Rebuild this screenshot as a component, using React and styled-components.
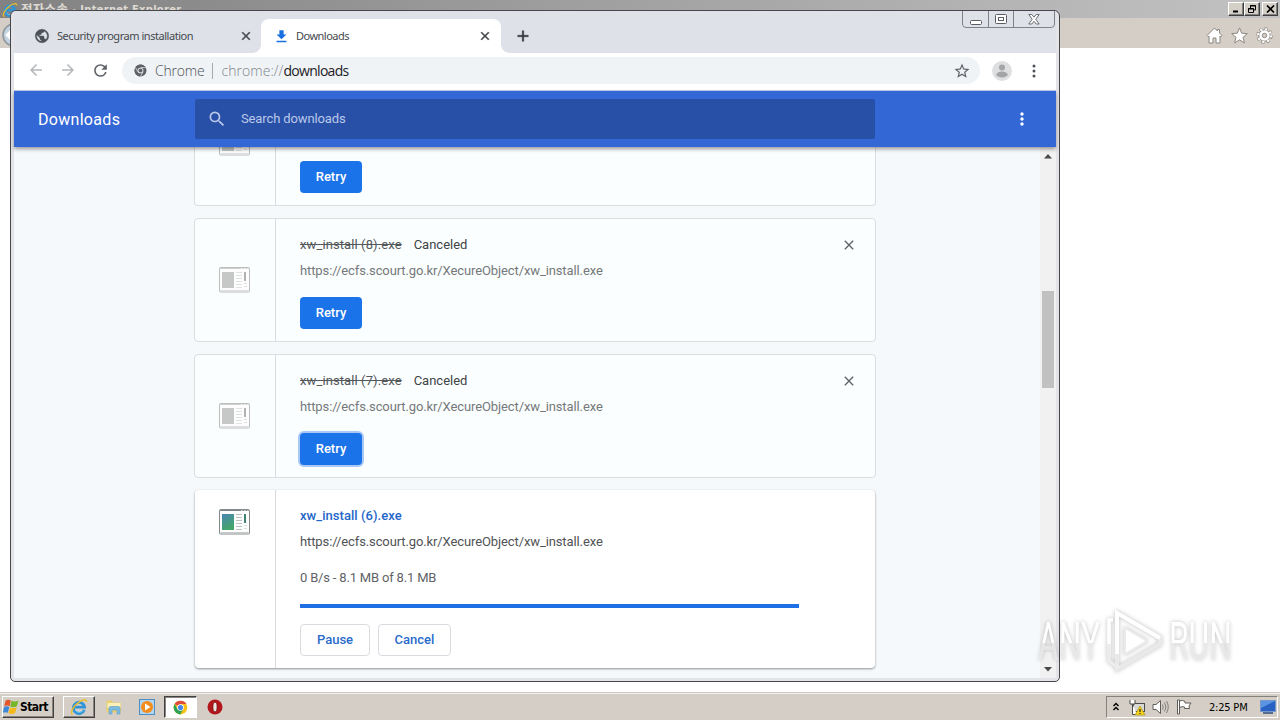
import styled, {createGlobalStyle, css} from "styled-components";
import {
    MdPublic, MdClose, MdAdd, MdArrowBack, MdArrowForward, MdRefresh,
    MdStarBorder, MdMoreVert, MdSearch, MdFileDownload
} from "react-icons/md";

const GlobalStyle = createGlobalStyle`
    * { box-sizing : border-box; }
    body {
        margin : 0;
        overflow : hidden;
        font-family : Roboto, "Liberation Sans", sans-serif;
    }
    button { font-family : inherit; padding : 0; }
    svg { display : block; flex : none; }
`;

/* ---------- desktop ---------- */
const Desktop = styled.div`
    position : relative;
    width : 1280px;
    height : 720px;
    display : flex;
    flex-direction : column;
    background : #fff;
    overflow : hidden;
`;
const IeTitle = styled.div`
    height : 18px;
    flex : none;
    display : flex;
    align-items : center;
    justify-content : space-between;
    padding : 0 2px 0 2px;
    background : linear-gradient(90deg, #828282, #c2c2c2);
`;
const IeName = styled.div`
    display : flex;
    align-items : center;
    gap : 3px;
    color : #dedad2;
    font : bold 11px/16px "DejaVu Sans Condensed", "Noto Sans CJK KR", sans-serif;
    letter-spacing : 0.3px;
    white-space : nowrap;
    padding-top : 1px;
`;
const Korean = styled.span`
    font-size : 12.5px;
    margin-right : 1px;
`;
const WinButtons = styled.div`
    display : flex;
    button:last-child { margin-left : 2px; }
`;
const WinButton = styled.button`
    width : 16px;
    height : 14px;
    display : flex;
    align-items : center;
    justify-content : center;
    background : #d4d0c8;
    border : 1px solid;
    border-color : #fff #404040 #404040 #fff;
    box-shadow : inset -1px -1px 0 #808080;
`;
const IeToolbar = styled.div`
    height : 30px;
    flex : none;
    display : flex;
    align-items : center;
    justify-content : space-between;
    padding : 4px 7px 0 2px;
    background : #d4cec6;
`;
const IeTools = styled.div`
    display : flex;
    gap : 8px;
`;
const IePage = styled.div`
    flex : 1;
    background : #fff;
`;

/* ---------- chrome window ---------- */
const Window = styled.div`
    position : absolute;    // 바탕화면 위에 떠있는 창
    left : 10px;
    top : 10px;
    width : 1050px;
    height : 672px;
    display : flex;
    flex-direction : column;
    padding : 0 3px 3px;
    border : 1px solid #46464c;
    border-radius : 6px 6px 5px 5px;
    background : #e2e4e8;
    overflow : hidden;
`;
const TabStrip = styled.div`
    height : 42px;
    flex : none;
    display : flex;
    align-items : flex-end;
    background : #dee1e8;
    path[fill="none"] { stroke : none; }
`;
const Tab = styled.div`
    position : relative;
    width : ${p => p.$width};
    height : 34px;
    display : flex;
    align-items : center;
    padding : 0 ${p => p.$active ? "9px" : "8px"} 0 ${p => p.$active ? "12px" : "20px"};
    color : #45494d;
    font-family : "Noto Sans", sans-serif;
    font-size : 11px;
    letter-spacing : ${p => p.$track};
    white-space : nowrap;
    ${p => p.$active && css`
        background : #fff;
        border-radius : 8px 8px 0 0;
        &::before, &::after {
            content : "";
            position : absolute;
            bottom : 0;
            width : 8px;
            height : 8px;
        }
        &::before {
            left : -8px;
            background : radial-gradient(circle at 0 0, transparent 7.5px, #fff 8px);
        }
        &::after {
            right : -8px;
            background : radial-gradient(circle at 100% 0, transparent 7.5px, #fff 8px);
        }
    `}
`;
const TabTitle = styled.span`
    flex : 1;
    margin-left : ${p => p.$gap};
    padding-bottom : 2px;
`;
const NewTab = styled.div`
    height : 34px;
    margin-left : 13px;
    display : flex;
    align-items : center;
    color : #33363b;
    svg { stroke : currentColor; stroke-width : 0.6; }
`;
const Caption = styled.div`
    position : absolute;
    right : 4px;
    top : -1px;
    width : 93px;
    height : 18px;
    display : grid;
    grid-template-columns : 25px 25px 1fr;
    border : 1px solid #808288;
    border-radius : 0 0 4px 4px;
`;
const CaptionCell = styled.div`
    display : flex;
    align-items : center;
    justify-content : center;
    & + & { border-left : 1px solid #808288; }
`;
const Toolbar = styled.div`
    height : 38px;
    flex : none;
    display : flex;
    align-items : center;
    background : #fff;
    border-bottom : 1px solid #c3cff0;
    color : #5f6368;
    padding : 0 13px 2px;
`;
const NavIcons = styled.div`
    display : flex;
    gap : 14px;
    width : 95px;
    svg:nth-child(-n+2) { color : #b4b6b9; }
`;
const Omnibox = styled.div`
    width : 858px;
    height : 27px;
    display : flex;
    align-items : center;
    padding : 0 9px 0 12px;
    border-radius : 14px;
    background : #f0f3f6;
    font-family : "Open Sans", sans-serif;
    font-weight : 300;
    font-size : 14px;
    white-space : nowrap;
`;
const Origin = styled.span`
    margin-left : 8px;
    color : #4c5056;
    letter-spacing : -0.2px;
`;
const Bar = styled.span`
    width : 1px;
    height : 16px;
    margin : 0 8px;
    background : #a7abb0;
`;
const Address = styled.span`
    flex : 1;
    color : #80868b;
    letter-spacing : 0.05px;
    b { font-weight : 400; color : #1d2024; letter-spacing : -0.7px; }
`;

/* ---------- downloads page ---------- */
const Header = styled.div`
    position : relative;
    z-index : 1;
    height : 56px;
    flex : none;
    display : flex;
    align-items : center;
    background : #3367d6;
    box-shadow : 0 2px 4px rgba(0, 0, 0, .4);
    color : #fff;
`;
const PageName = styled.div`
    width : 181px;
    padding-left : 24px;
    font-size : 16px;
    letter-spacing : 0.3px;
`;
const Search = styled.div`
    width : 680px;
    height : 40px;
    display : flex;
    align-items : center;
    gap : 14px;
    padding : 0 0 1px 12px;
    border-radius : 2px;
    background : #2950a7;
    color : #b9c8ea;
    font-size : 13px;
    letter-spacing : -0.12px;
    margin-right : 137px;
`;
const Page = styled.div`
    flex : 1;
    min-height : 0;
    display : flex;
    justify-content : space-between;
    background : #f6f9fc;
`;
const List = styled.div`
    width : 682px;
    height : 531px;
    margin-left : 180px;
    display : flex;
    flex-direction : column;
    gap : 12px;
`;
const Card = styled.div`
    flex : none;
    height : ${p => p.$active ? "178px" : "124px"};
    display : flex;
    ${p => p.$active ? css`
        margin : 0 1px;
        background : #fff;
        border-radius : 4px;
        box-shadow : 0 1px 2px rgba(60, 64, 67, .4), 0 1px 3px rgba(60, 64, 67, .2);
    ` : css`
        background : #fbfefe;
        border : 1px solid #d9dedf;
        border-radius : 4px;
    `}
    ${p => p.$cut && css`
        height : 59px;
        border-top : none;
        border-radius : 0 0 4px 4px;
    `}
`;
const IconCell = styled.div`
    width : 81px;
    display : flex;
    justify-content : center;
    align-items : ${p => p.$active ? "flex-start" : "center"};
    padding-top : ${p => p.$active ? "19px" : "0"};
    padding-right : 2px;
    border-right : 1px solid #d8dbdd;
    ${p => p.$cut && "align-items : flex-start; overflow : hidden; svg { margin-top : -17px; }"}
`;
const Body = styled.div`
    flex : 1;
    padding : ${p => p.$cut ? "14px" : "17px"} 18px 0 24px;
    font-size : 13px;
    line-height : 18px;
`;
const TitleRow = styled.div`
    display : flex;
    align-items : center;
    height : 18px;
    color : #404346;
    svg { margin-left : auto; color : #5f6368; }
`;
const FileName = styled.span`
    letter-spacing : ${p => p.$active ? "0.05px" : "0.1px"};
    ${p => p.$active
        ? "color : #1f66c9; font-weight : 500;"
        : "color : #55585b; text-decoration : line-through; margin-right : 12px;"}
`;
const Url = styled.div`
    margin-top : 8px;
    color : ${p => p.$active ? "#505356" : "#75797c"};
    letter-spacing : -0.11px;
`;
const Speed = styled.div`
    margin-top : 18px;
    color : #5f6368;
    letter-spacing : -0.18px;
`;
const Progress = styled.div`
    width : 499px;
    height : 4px;
    margin-top : 17px;
    background : #1f6fe5;
`;
const Actions = styled.div`
    display : flex;
    gap : 8px;
    margin-top : ${p => p.$top};
`;
const Button = styled.button`
    width : ${p => p.$width};
    height : 32px;
    border-radius : 4px;
    font-size : 13px;
    font-weight : 500;
    padding-bottom : 2px;
    ${p => p.$primary
        ? "background : #1a73e8; color : #fff; border : none;"
        : "background : #fff; color : #2a6ccb; border : 1px solid #d9dce0;"}
    ${p => p.$focus && "box-shadow : 0 0 0 2px #a9c8f5;"}
`;
const ScrollBar = styled.div`
    width : 16px;
    display : flex;
    flex-direction : column;
    align-items : center;
    background : #f1f1f2;
    padding : 7px 0 6px;
`;
const Thumb = styled.div`
    width : 12px;
    height : 97px;
    margin : 132px 0 auto;
    background : #c1c1c2;
`;

/* ---------- taskbar ---------- */
const Taskbar = styled.div`
    height : 28px;
    flex : none;
    display : flex;
    align-items : center;
    padding : 1px 2px 0;
    background : #d4cec6;
    border-top : 1px solid #d0ccc5;
    box-shadow : inset 0 1px 0 #f3f1ee;
    font-family : "DejaVu Sans Condensed", sans-serif;
`;
const TaskButton = styled.div`
    width : ${p => p.$width};
    height : 22px;
    display : flex;
    align-items : center;
    justify-content : center;
    gap : 1px;
    font-size : 12px;
    font-weight : bold;
    letter-spacing : -0.6px;
    margin-right : ${p => p.$gap || "0"};
    ${p => p.$start && "justify-content : flex-start; padding-left : 0;"}
    ${p => p.$raised && css`
        border : 1px solid;
        border-color : #fff #404040 #404040 #fff;
        box-shadow : inset -1px -1px 0 #8a867f;
    `}
    ${p => p.$pressed && css`
        background : #fff;
        border : 1px solid;
        border-color : #404040 #fff #fff #404040;
        box-shadow : inset 1px 1px 0 #8a867f;
    `}
`;
const Tray = styled.div`
    width : 172px;
    height : 22px;
    margin-left : auto;
    display : flex;
    align-items : center;
    padding : 0 1px 0 5px;
    border : 1px solid;
    border-color : #85817b #fff #fff #85817b;
    font-size : 11px;
`;
const Clock = styled.span`
    width : 44px;
    margin : 0 7px 0 17px;
    letter-spacing : -0.2px;
    white-space : nowrap;
`;
const Watermark = styled.div`
    position : absolute;
    left : 1038px;
    top : 608px;
    width : 194px;
    height : 66px;
    display : flex;
    align-items : center;
    justify-content : space-between;
    filter : drop-shadow(0 0 2px rgba(0, 0, 0, .26));
`;
const MarkWord = styled.div`
    width : 63px;
    height : 62px;
    padding-top : 1px;
`;
const MarkText = styled.span`
    display : block;
    width : max-content;
    color : transparent;
    background : linear-gradient(#fff 52%, rgba(234, 234, 234, .8) 52%);
    background-clip : text;
    font : 400 53px/62px Roboto, sans-serif;
    transform : scaleX(${p => p.$scale});
    transform-origin : left;
    white-space : nowrap;
`;

/* ---------- drawings ---------- */
const IeLogo = ({size}) => (
    <svg width={size} height={size} viewBox="0 0 18 18" fill="none">
        <path d="M14.3 11.8A5.6 5.6 0 1 1 14.6 9.2H5" stroke="#2f93d8" strokeWidth="2.8"/>
        <path d="M13.8 11.6A5 5 0 0 1 5 12" stroke="#7cc9f0" strokeWidth="0.9"/>
        <path d="M2.6 16.4C-.5 15 3.5 8 9 4.2c4-2.8 8-3.4 7.4-.4" stroke="#e9bd2c" strokeWidth="1.5"/>
    </svg>
);
const WindowsLogo = () => (
    <svg width="16" height="16" viewBox="0 0 16 16">
        <path d="M2.6 1.6C4.6.3 6 .5 7.8 1.400L6.5 7.200C4.800 6.200 3 6.400 1.200 7.400z" fill="#e5562a"/>
        <path d="M8.500 1.800c2 1 4.500.9 7-.3l-1.600 5.800c-2.200 1.200-4.400 1.300-6.700.3z" fill="#78b72c"/>
        <path d="M1 8.200c2-1.200 3.500-1.300 5.300-.3L4.800 13.800c-1.800-.9-3.500-.8-5 .2z" fill="#3b87d9"/>
        <path d="M7 8.400c2.200 1 4.400.9 6.700-.2l-1.600 5.900c-2.200 1.200-4.400 1.200-6.700.2z" fill="#f6b91b"/>
    </svg>
);
const ChromeLogo = ({size, gray}) => (
    <svg width={size} height={size} viewBox="0 0 24 24">
        <circle cx="12" cy="12" r="11" fill={gray ? "#5f6368" : "#fbc116"}/>
        <path d="M12 12L2.5 6.5A11 11 0 0 1 21.5 6.5H12z" fill={gray ? "#5f6368" : "#dd4b3e"}/>
        <path d="M2.5 6.5A11 11 0 0 0 11.6 23L16.6 14.5 7.3 14.8z" fill={gray ? "#5f6368" : "#2da253"}/>
        {gray && <path d="M12 6.6h9.6M7.4 14.7L2.7 6.6M16.6 14.7L11.7 23" stroke="#f0f3f6" strokeWidth="1.2"/>}
        <circle cx="12" cy="12" r="5.3" fill={gray ? "#f0f3f6" : "#fff"}/>
        <circle cx="12" cy="12" r={gray ? 3.8 : 4.1} fill={gray ? "#5f6368" : "#4286ee"}/>
    </svg>
);
const FileIcon = ({active}) => (
    <svg width="31" height="26" viewBox="0 0 31 26">
        <defs>
            <linearGradient id="pic" x1="0" y1="0" x2="0.4" y2="1">
                <stop offset="0" stopColor="#4a86b5"/>
                <stop offset="1" stopColor="#43a568"/>
            </linearGradient>
        </defs>
        <rect x="0.5" y="0.5" width="30" height="24.500" rx="1" fill="#fdfdfd" stroke={active ? "#858a8c" : "#bcbebe"}/>
        <path d="M1 1.500h29" stroke={active ? "#7b8386" : "#cfd1d1"}/>
        <path d="M22 2h2M25 2h2M28 2h1.500" stroke="#fff"/>
        <path d="M1.500 23.500h28" stroke={active ? "#c5c9ca" : "#dddfdf"}/>
        <rect x="3" y="5" width="12" height="16" fill={active ? "url(#pic)" : "#c6c8c8"}/>
        <path d="M17 5.500h6M17 8.500h6M17 11.500h6M17 14.500h6M17 17.500h6M17 20.500h6" stroke={active ? "#bcc0c1" : "#dfe0e0"}/>
        <path d="M26 5v9" stroke={active ? "#3f8377" : "#b1b3b3"} strokeWidth="2"/>
        <path d="M25 16.500h3M25 19.500h3" stroke="#dddfdf"/>
    </svg>
);
const HomeIcon = () => (
    <svg width="17" height="17" viewBox="0 0 17 17" fill="#fff" stroke="#8b8781">
        <path d="M8.500 1L1 8.500l1.200 1.200.8-.7v7h4v-5h3v5h4V9l.8.700L16 8.500l-2.500-2.500V2.500h-2V4z"/>
    </svg>
);
const FavIcon = () => (
    <svg width="17" height="17" viewBox="0 0 17 17" fill="#fff" stroke="#8b8781">
        <path d="M8.500 .8l2.200 5.400 5.600.4-4.300 3.700 1.400 5.600-4.900-3-4.900 3L5 10.300.7 6.600l5.600-.4z"/>
    </svg>
);
const GearIcon = () => (
    <svg width="17" height="17" viewBox="0 0 17 17" fill="none">
        <circle cx="8.500" cy="8.500" r="6.700" stroke="#8b8781" strokeWidth="3" strokeDasharray="3 2.260"/>
        <circle cx="8.500" cy="8.500" r="5.700" fill="#fff" stroke="#8b8781"/>
        <circle cx="8.500" cy="8.500" r="6.500" stroke="#fff" strokeWidth="2.200" strokeDasharray="2 3.100"/>
        <circle cx="8.500" cy="8.500" r="2.200" fill="#d4cec6" stroke="#8b8781"/>
    </svg>
);
const Arrow = ({down}) => (
    <svg width="8" height="5" viewBox="0 0 8 5">
        <path d={down ? "M0 0h8L4 4.500z" : "M0 4.500h8L4 0z"} fill="#484c48"/>
    </svg>
);

const items = [
    {id : 8, name : "xw_install (8).exe"},
    {id : 7, name : "xw_install (7).exe", focus : true},
];
const url = "https://ecfs.scourt.go.kr/XecureObject/xw_install.exe";

// 헤더 밑으로 스크롤되어 아래쪽만 보이는 항목
function ScrolledItem() {
    return (
    <Card $cut>
        <IconCell $cut><FileIcon/></IconCell>
        <Body $cut>
            <Actions $top="0"><Button $primary $width="62px">Retry</Button></Actions>
        </Body>
    </Card>);
}

function CanceledItem({name, focus}) {
    return (
    <Card>
        <IconCell><FileIcon/></IconCell>
        <Body>
            <TitleRow>
                <FileName>{name}</FileName>Canceled
                <MdClose size={16}/>
            </TitleRow>
            <Url>{url}</Url>
            <Actions $top="17px">
                <Button $primary $width="62px" $focus={focus}>Retry</Button>
            </Actions>
        </Body>
    </Card>);
}

function ActiveItem() {
    return (
    <Card $active>
        <IconCell $active><FileIcon active/></IconCell>
        <Body>
            <TitleRow><FileName $active>xw_install (6).exe</FileName></TitleRow>
            <Url $active>{url}</Url>
            <Speed>0 B/s - 8.1 MB of 8.1 MB</Speed>
            <Progress/>
            <Actions $top="16px">
                <Button $width="70px">Pause</Button>
                <Button $width="73px">Cancel</Button>
            </Actions>
        </Body>
    </Card>);
}

function ChromeWindow() {
    return (
    <Window>
        <TabStrip>
            <Tab $width="247px" $track="-0.46px">
                <MdPublic size={16} color="#4d5156" stroke="#4d5156" strokeWidth="0.6"/>
                <TabTitle $gap="7px">Security program installation</TabTitle>
                <MdClose size={14} strokeWidth="0.9"/>
            </Tab>
            <Tab $active $width="240px" $track="-0.52px">
                <MdFileDownload size={17} color="#1a6fe0"/>
                <TabTitle $gap="6px">Downloads</TabTitle>
                <MdClose size={14} strokeWidth="0.9"/>
            </Tab>
            <NewTab><MdAdd size={18}/></NewTab>
        </TabStrip>
        <Caption>
            <CaptionCell>
                <svg width="12" height="14" viewBox="0 0 12 14"><rect x="0.5" y="8.500" width="11" height="4" rx="1" fill="#fff" stroke="#5b5d63"/></svg>
            </CaptionCell>
            <CaptionCell>
                <svg width="12" height="11" viewBox="0 0 12 11" fill="#fff" stroke="#5b5d63">
                    <rect x="0.500" y="0.500" width="11" height="9" rx="1"/><rect x="3.500" y="3.500" width="5" height="3"/>
                </svg>
            </CaptionCell>
            <CaptionCell>
                <svg width="12" height="11" viewBox="0 0 12 11" fill="#fff" stroke="#6b6d73">
                    <path d="M.8.500h3L6 3.200 8.200.500h3L7.800 5.300l3.400 4.700h-3L6 7.300 3.800 10h-3l3.400-4.700z"/>
                </svg>
            </CaptionCell>
        </Caption>
        <Toolbar>
            <NavIcons>
                <MdArrowBack size={18}/><MdArrowForward size={18}/><MdRefresh size={19}/>
            </NavIcons>
            <Omnibox>
                <ChromeLogo size={13} gray/>
                <Origin>Chrome</Origin><Bar/>
                <Address>chrome://<b>downloads</b></Address>
                <MdStarBorder size={18}/>
            </Omnibox>
            <svg width="20" height="20" viewBox="0 0 20 20" style={{marginLeft : 12}}>
                <circle cx="10" cy="10" r="10" fill="#dedfe0"/>
                <circle cx="10" cy="6.500" r="3" fill="#a3a5a7"/>
                <ellipse cx="10" cy="13.500" rx="5.700" ry="3" fill="#a3a5a7"/>
            </svg>
            <svg width="4" height="14" viewBox="0 0 4 14" fill="#505459" style={{marginLeft : 20}}>
                <circle cx="2" cy="2" r="1.500"/><circle cx="2" cy="7" r="1.500"/><circle cx="2" cy="12" r="1.500"/>
            </svg>
        </Toolbar>
        <Header>
            <PageName>Downloads</PageName>
            <Search><MdSearch size={20}/>Search downloads</Search>
            <MdMoreVert size={20}/>
        </Header>
        <Page>
            <List>
                <ScrolledItem/>
                {items.map(d => <CanceledItem key={d.id} name={d.name} focus={d.focus}/>)}
                <ActiveItem/>
            </List>
            <ScrollBar><Arrow/><Thumb/><Arrow down/></ScrollBar>
        </Page>
    </Window>);
}

function TaskBar() {
    return (
    <Taskbar>
        <TaskButton $raised $start $width="52px" $gap="9px"><WindowsLogo/>Start</TaskButton>
        <TaskButton $raised $width="32px" $gap="2px"><IeLogo size={18}/></TaskButton>
        <TaskButton $width="33px">
            <svg width="18" height="18" viewBox="0 0 18 18">
                <path d="M1.500 2.500h5l1.500 2h8v10h-14.500z" fill="#e8cf72"/>
                <path d="M2.500 5h13v5h-13z" fill="#fbf1b8"/>
                <path d="M4 16V10q0-1.500 1.500-1.500h8Q15 8.500 15 10v6h-3v-4H7v4z" fill="#7dbbe0" stroke="#5a9ac6" strokeWidth="0.600"/>
            </svg>
        </TaskButton>
        <TaskButton $width="34px">
            <svg width="18" height="18" viewBox="0 0 18 18">
                <rect x="1.500" y="1.500" width="15" height="15" fill="#b5d5ed" stroke="#4c8fc6"/>
                <circle cx="9" cy="9" r="6" fill="#f28c1c"/>
                <path d="M7 5.500v7L12.500 9z" fill="#fff"/>
            </svg>
        </TaskButton>
        <TaskButton $pressed $width="33px" $gap="9px"><ChromeLogo size={15}/></TaskButton>
        <TaskButton $width="18px">
            <svg width="16" height="16" viewBox="0 0 16 16">
                <circle cx="8" cy="8" r="7.500" fill="#b3161b"/>
                <ellipse cx="8" cy="8" rx="2.200" ry="5" fill="#efe6e4" stroke="#7b0b0f"/>
            </svg>
        </TaskButton>
        <Tray>
            <svg width="8" height="10" viewBox="0 0 8 10" fill="none" stroke="#000" strokeWidth="1.400">
                <path d="M1.500 4l2.500-2.500L6.500 4M1.500 8l2.500-2.500L6.500 8"/>
            </svg>
            <svg width="18" height="17" viewBox="0 0 18 17" style={{marginLeft : 8}}>
                <rect x="5.500" y="4.500" width="11" height="8" fill="#d8d8d4" stroke="#4b4b49"/>
                <path d="M2 1v4h5V1M4.500 5v10.500H9" fill="#fff" stroke="#4b4b49"/>
                <path d="M12 7l5 9H7z" fill="#f7d41c" stroke="#a58a08" strokeWidth="0.600"/>
                <path d="M12 10v3M12 14v1" stroke="#222" strokeWidth="1.200"/>
            </svg>
            <svg width="17" height="16" viewBox="0 0 17 16" fill="none" stroke="#5e5c58" style={{marginLeft : 6}}>
                <path d="M1 5.500h3L8.500 1.500v13L4 10.500H1z" fill="#fff"/>
                <path d="M10.500 5.500q1.500 2.500 0 5M12.500 3.500q3 4.500 0 9M14.500 2q3.500 6 0 12" stroke="#83807b"/>
            </svg>
            <svg width="16" height="16" viewBox="0 0 16 16" fill="#fff" stroke="#5e5c58" style={{marginLeft : 7}}>
                <path d="M1.500 1h2v14h-2zM3.500 2q3-1.500 5.500.500v1.500h6l-2 3 .500 2.500H8.500V8q-2-1-5 .500z"/>
            </svg>
            <Clock>2:25 PM</Clock>
            <svg width="16" height="14" viewBox="0 0 16 14">
                <rect x="0.500" y="0.500" width="15" height="11" fill="#2a62c4" stroke="#7798c8"/>
                <path d="M1 1h14L1 8z" fill="#5a94e2"/>
                <path d="M3 13h10" stroke="#2d4d80" strokeWidth="1.500"/>
            </svg>
        </Tray>
    </Taskbar>);
}

function App() {
    return (
    <>
    <GlobalStyle/>
    <Desktop>
        <IeTitle>
            <IeName><IeLogo size={16}/><Korean>전자소송</Korean>- Internet Explorer</IeName>
            <WinButtons>
                <WinButton><svg width="8" height="8" viewBox="0 0 8 8"><path d="M1 6.500h5" stroke="#000" strokeWidth="2"/></svg></WinButton>
                <WinButton>
                    <svg width="9" height="9" viewBox="0 0 9 9" fill="none" stroke="#000">
                        <path d="M2.500 3V.5h5v4.500H6M2 1h6"/><path d="M.500 3.500h5v4h-5zM0 4h6"/>
                    </svg>
                </WinButton>
                <WinButton><svg width="9" height="8" viewBox="0 0 9 8"><path d="M1 .500l7 7M8 .500l-7 7" stroke="#000" strokeWidth="1.700"/></svg></WinButton>
            </WinButtons>
        </IeTitle>
        <IeToolbar>
            <svg width="24" height="24" viewBox="0 0 24 24">
                <circle cx="12" cy="12" r="11" fill="#c3d2e0" stroke="#8e959b" strokeWidth="1.500"/>
                <path d="M11 6l-6 6 6 6M5 12h13" fill="none" stroke="#fff" strokeWidth="2.500"/>
            </svg>
            <IeTools><HomeIcon/><FavIcon/><GearIcon/></IeTools>
        </IeToolbar>
        <IePage/>
        <TaskBar/>
        <ChromeWindow/>
        <Watermark>
            <MarkWord><MarkText $scale={0.6}>ANY</MarkText></MarkWord>
            <svg width="58" height="66" viewBox="0 0 58 66" fill="none">
                <path d="M11 5l43 25v6L11 61V46" stroke="#e9e9e9" strokeWidth="4"/>
                <path d="M11 46V5l43 25" stroke="#fff" strokeWidth="4"/>
                <path d="M3 46V12h4" stroke="#fff" strokeWidth="3.500"/>
                <path d="M3 36v17l10 7" stroke="#ececec" strokeWidth="3.500"/>
                <path d="M19 20v26l22-13z" fill="#fff" stroke="#ebebeb" strokeWidth="2"/>
            </svg>
            <MarkWord><MarkText $scale={0.6}>RUN</MarkText></MarkWord>
        </Watermark>
    </Desktop>
    </>);
}
export default App;
